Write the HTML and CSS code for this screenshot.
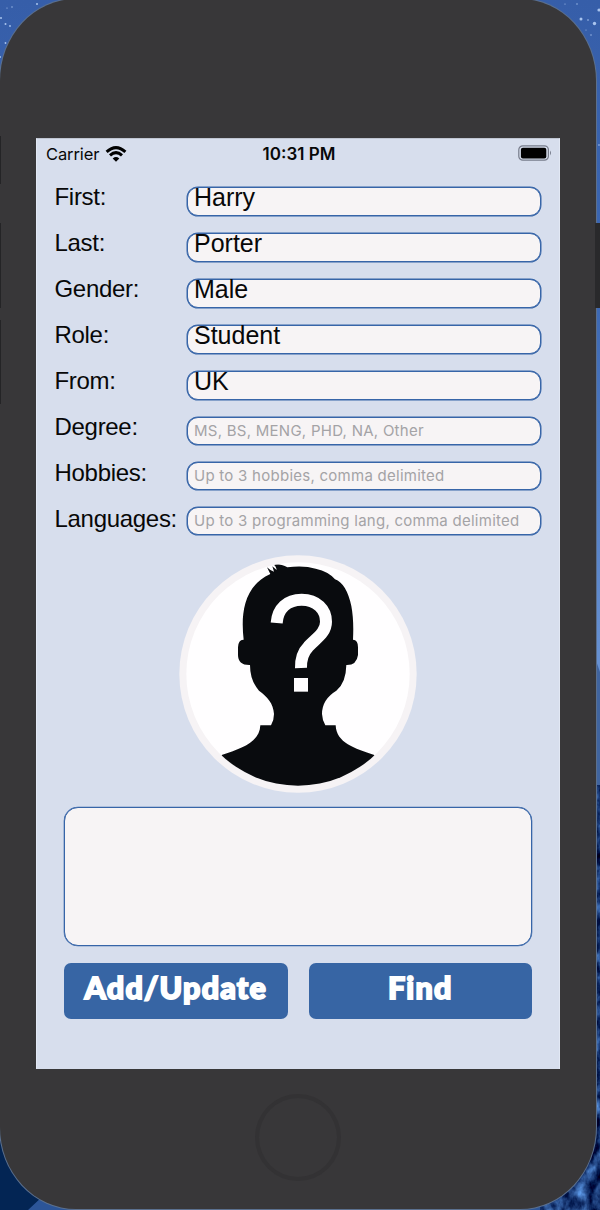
FILE: index.html
```html
<!DOCTYPE html>
<html lang="en">
<head>
<meta charset="utf-8">
<title>Profile form</title>
<link rel="stylesheet" href="styles.css">
</head>
<body>
<div class="desktop">
  <svg class="wallpaper" width="600" height="1210" viewBox="0 0 600 1210">
    <defs>
      <linearGradient id="sky" x1="0" y1="0" x2="0" y2="1">
        <stop offset="0" stop-color="#365ea9"/><stop offset=".25" stop-color="#3c68b4"/><stop offset=".54" stop-color="#6690d2"/>
      </linearGradient>
      <filter id="rock" x="0" y="0" width="1" height="1" color-interpolation-filters="sRGB">
        <feTurbulence type="fractalNoise" baseFrequency=".09 .06" numOctaves="4" seed="4"/>
        <feColorMatrix values=".7 0 0 0 -.26  1 0 0 0 -.29  1.2 0 0 0 -.16  0 0 0 0 1"/>
      </filter>
    </defs>
    <rect width="600" height="1210" fill="url(#sky)"/>
    <path d="M594 655L600 672V1210H594Z" fill="#40649f"/>
    <rect y="785" width="600" height="425" fill="#173c79"/>
    <rect x="480" y="785" width="120" height="425" filter="url(#rock)"/>
    <path d="M0 1120H30L48 1210H0Z" fill="#032554"/>
    <path d="M28 1210L43 1196L90 1206H540V1210Z" fill="#2c5598"/>
    <g fill="#a9c4ee">
      <circle cx="37" cy="4" r="1"/><circle cx="12" cy="7" r=".7"/><circle cx="7" cy="8" r=".6"/><circle cx="1" cy="18" r="1"/><circle cx="5.500" cy="24" r="1"/><circle cx="10" cy="26" r=".9"/><circle cx="5.500" cy="43" r=".9"/><circle cx="0" cy="57" r="1"/>
      <circle cx="581" cy="19" r="1.500"/><circle cx="594.500" cy="23.500" r="1.700"/><circle cx="599" cy="10" r="1.600"/><circle cx="588" cy="20" r=".8"/><circle cx="577" cy="4" r=".7"/><circle cx="565" cy="4" r=".6"/><circle cx="591" cy="35" r=".7"/><circle cx="586" cy="30" r=".5"/><circle cx="599" cy="145" r=".8"/>
    </g>
  </svg>
  <div class="phone">
    <div class="screen">
      <header class="status">
        <div class="carrier"><span>Carrier</span>
          <svg width="22" height="16" viewBox="0 0 22 16" fill="none" stroke="#000" stroke-width="3">
            <path d="M1.600 5.900Q11-2.600 20.400 5.900"/><path d="M5 9.300Q11 3.900 17 9.300"/><path d="M11 15.700L7.700 12.400Q11 9.500 14.300 12.400Z" fill="#000" stroke="none"/>
          </svg>
        </div>
        <div class="time">10:31 PM</div>
        <svg class="battery" width="34" height="16" viewBox="0 0 34 16">
          <rect x=".8" y=".8" width="29.600" height="14.400" rx="4" fill="none" stroke="#777c8b" stroke-width="1.200"/>
          <rect x="2.900" y="2.700" width="25.400" height="10.900" rx="2" fill="#000"/>
          <path d="M32 5.600Q34 8 32 10.400Z" fill="#777c8b"/>
        </svg>
      </header>
      <form class="form">
        <div class="labels">
          <label>First:</label><label>Last:</label><label>Gender:</label><label>Role:</label><label>From:</label><label>Degree:</label><label>Hobbies:</label><label>Languages:</label>
        </div>
        <div class="fields">
          <div class="field filled"><span>Harry</span></div>
          <div class="field filled"><span>Porter</span></div>
          <div class="field filled"><span>Male</span></div>
          <div class="field filled"><span>Student</span></div>
          <div class="field filled"><span>UK</span></div>
          <div class="field"><span class="hint">MS, BS, MENG, PHD, NA, Other</span></div>
          <div class="field"><span class="hint">Up to 3 hobbies, comma delimited</span></div>
          <div class="field"><span class="hint">Up to 3 programming lang, comma delimited</span></div>
        </div>
      </form>
      <svg class="avatar" width="238" height="238" viewBox="27 30 714 714">
        <defs><clipPath id="photo"><circle cx="384" cy="387" r="335"/></clipPath></defs>
        <circle cx="384" cy="387" r="356" fill="#f6f3f5"/>
        <circle cx="384" cy="387" r="335" fill="#fffeff"/>
        <g clip-path="url(#photo)">
          <path fill="#090b0e" d="M301 87L291 67Q302 78 312 80L307 64L320 75Q318 62 308 58Q337 57 352 67Q402 61 437 71Q477 80 495 103Q529 115 544 183Q552 225 549 284Q564 284 564 307V330Q560 361 529 360Q528 414 499 437Q456 463 456 507Q457 526 466 541H497C499 594 554 610 613 630L640 765H130L155 630C214 611 269 592 271 541H303Q312 526 312 507C310 474 292 456 267 437Q240 407 240 360Q204 361 204 330V307Q205 283 221 284C213 215 217 124 301 87Z"/>
          <path d="M320 234C323 190 352 164 395 164C440 164 468 193 468 230C468 264 438 280 415 305Q392 328 393 369" fill="none" stroke="#fffeff" stroke-width="36"/>
          <rect x="372" y="399" width="42" height="41" fill="#fffeff"/>
        </g>
      </svg>
      <div class="output"></div>
      <div class="actions">
        <div class="button"><span>Add/Update</span></div>
        <div class="button"><span>Find</span></div>
      </div>
    </div>
    <div class="home"></div>
  </div>
  <i class="key mute"></i><i class="key up"></i><i class="key down"></i><i class="key power"></i>
</div>
</body>
</html>
```

FILE: styles.css
```css
* { box-sizing: border-box; }
body { margin: 0; font-family: "Liberation Sans", Arial, sans-serif; color: #080808; }
.desktop { position: relative; width: 600px; height: 1210px; overflow: hidden; background: #365ea9; }
.wallpaper { position: absolute; inset: 0; }
.phone { position: relative; width: 596px; height: 1210px; margin-top: -1px; padding: 139px 36px 0; background: #383739; border-radius: 76px / 82px; box-shadow: 0 0 0 1px #5b708f; }
.screen { width: 524px; height: 931px; margin-right: -1px; background: #d7deed; border: 1px solid #e2e8f4; border-top-color: #bfc5d2; border-bottom: 0; display: flex; flex-direction: column; }
.status { height: 27px; flex: none; display: grid; grid-template-columns: 1fr auto 1fr; align-items: center; padding: 0 7px 0 9px; font: 16.5px/27px Inter, sans-serif; }
.carrier { display: flex; align-items: center; gap: 6px; letter-spacing: -.1px; }
.carrier span, .time { padding-top: 1px; }
.time { font-weight: 600; font-size: 17px; line-height: 28px; }
.battery { justify-self: end; margin-top: -1px; }
.form { display: flex; margin-top: 21px; padding-left: 17px; height: 348px; flex: none; }
.labels { width: 133px; flex: none; }
.labels label { display: block; height: 46px; font-size: 24px; line-height: 19px; white-space: nowrap; letter-spacing: -.3px; padding-left: .5px; }
.fields { width: 354px; display: flex; flex-direction: column; gap: 17px; }
.field { height: 28px; flex: none; border: 1px solid #3765a8; border-radius: 11px; background: #f7f4f5; padding-left: 6px; display: flex; align-items: center; white-space: nowrap; box-shadow: 0 0 0 .5px #3765a8; }
.filled { height: 29px; font-size: 25px; line-height: 18px; align-items: flex-start; }
.hint { font: 15px/24px Inter, sans-serif; letter-spacing: .26px; color: #a4a3a6; }
.avatar { display: block; flex: none; margin: 20px 0 0 142px; }
.output { width: 468px; height: 139px; flex: none; margin: 14px 0 0 27px; border: 1px solid #3765a8; border-radius: 14px; background: #f7f4f5; box-shadow: 0 0 0 .3px #3765a8; }
.actions { display: flex; gap: 21px; margin: 17px 27px 0; width: 468px; }
.button { flex: 1; height: 56px; border-radius: 7px; background: #3765a4; color: #fff; display: flex; justify-content: center; font: 900 30.5px/49px Lato, sans-serif; letter-spacing: 1.2px; -webkit-text-stroke: 1.8px #fff; paint-order: stroke fill; stroke-linejoin: round; }
.home { width: 86px; height: 87px; margin: 25px auto 0 219px; border: 4px solid #333234; border-radius: 50%; }
.key { position: absolute; background: #242426; }
.mute { left: 0; top: 136px; width: 1px; height: 48px; }
.up { left: 0; top: 223px; width: 1px; height: 85px; }
.down { left: 0; top: 320px; width: 1px; height: 84px; }
.power { left: 595px; top: 223px; width: 5px; height: 85px; background: #29292b; }
```
